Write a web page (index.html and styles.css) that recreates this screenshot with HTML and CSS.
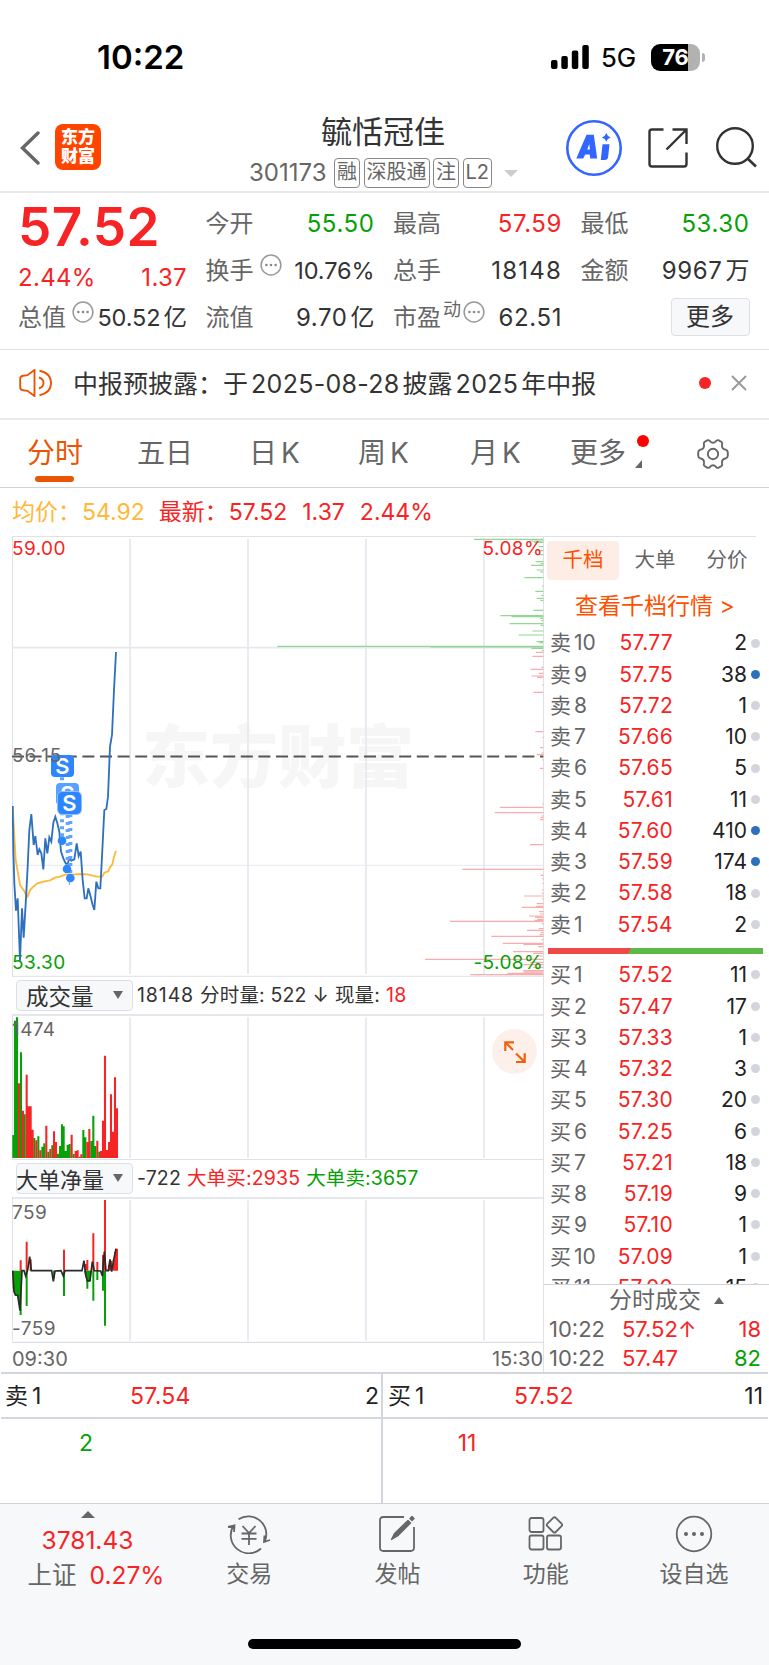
FILE: index.html
```html
<!DOCTYPE html>
<html lang="zh-CN">
<head>
    <meta charset="UTF-8">
    <meta name="viewport" content="width=device-width, initial-scale=1.0">
    <title>毓恬冠佳 301173</title>
    <link rel="stylesheet" href="styles.css">
</head>
<body>
    <svg class="defs" width="0" height="0">
        <symbol id="info" viewBox="0 0 22 22">
            <circle cx="11" cy="11" r="9.9" fill="none" stroke="#999" stroke-width="1.5"/>
            <circle cx="6.4" cy="11" r="1.3" fill="#888"/>
            <circle cx="11" cy="11" r="1.3" fill="#888"/>
            <circle cx="15.6" cy="11" r="1.3" fill="#888"/>
        </symbol>
    </svg>

    <div class="status">
        <span class="clock">10:22</span>
        <svg class="signal" width="38" height="24" viewBox="0 0 38 24">
            <rect x="0" y="15" width="6.5" height="9" rx="2"/>
            <rect x="10.3" y="11" width="6.5" height="13" rx="2"/>
            <rect x="20.8" y="5.5" width="6.5" height="18.5" rx="2"/>
            <rect x="31.3" y="0" width="6.5" height="24" rx="2"/>
        </svg>
        <span class="net">5G</span>
        <div class="battery"><span>76</span></div>
        <i class="nub"></i>
    </div>

    <header>
        <svg class="back" width="20" height="34" viewBox="0 0 20 34"><path d="M18 2 2.5 17 18 32" fill="none" stroke="#666" stroke-width="3.4" stroke-linecap="round"/></svg>
        <div class="logo">东方<br>财富</div>
        <div class="title">
            <h1>毓恬冠佳</h1>
            <div class="code">
                <span class="num">301173</span>
                <span class="tag">融</span>
                <span class="tag">深股通</span>
                <span class="tag">注</span>
                <span class="tag">L2</span>
                <i class="drop"></i>
            </div>
        </div>
        <svg class="ai" width="56" height="56" viewBox="0 0 56 56">
            <circle cx="28" cy="28" r="26.7" fill="#fff" stroke="#3366ff" stroke-width="2.6"/>
            <path d="M20.5 14.8h7.3l3.4 23.7h-7l-.5-4h-4.5l-2 4H10.3zM23.3 24l-2 5.5h2.6z" fill="#3366ff" fill-rule="evenodd"/>
            <path d="M36.5 24.2h7l-1.4 12.8q-.3 3-3.3 3H34.8z" fill="#3366ff"/>
            <path d="M40.3 13q1 3.4 4.4 4.4-3.4 1-4.4 4.4-1-3.4-4.4-4.4 3.4-1 4.4-4.4z" fill="#3366ff"/>
        </svg>
        <svg class="share" width="40" height="40" viewBox="0 0 40 40">
            <path d="M15.5 1.5H4q-2.5 0-2.5 2.5V36q0 2.5 2.5 2.5H36q2.5 0 2.5-2.5V24.5M18.5 21.5 38 2M24.5 1.5H38.5V16" fill="none" stroke="#333" stroke-width="2.4"/>
        </svg>
        <svg class="search" width="42" height="42" viewBox="0 0 42 42">
            <circle cx="19" cy="20" r="17.8" fill="none" stroke="#333" stroke-width="2.4"/>
            <path d="M31.5 32.5 40 40.5" stroke="#333" stroke-width="2.6"/>
        </svg>
    </header>

    <section class="quote">
        <div class="now">
            <div class="price">57.52</div>
            <div class="change"><span>2.44%</span><span>1.37</span></div>
            <div class="cell cap"><label>总值</label><svg class="info" width="22" height="22"><use href="#info"/></svg><b class="tight">50.52<i>亿</i></b></div>
        </div>
        <div class="cell"><label>今开</label><b class="green">55.50</b></div>
        <div class="cell"><label>最高</label><b class="red">57.59</b></div>
        <div class="cell"><label>最低</label><b class="green">53.30</b></div>
        <div class="cell turnover"><label>换手</label><svg class="info" width="22" height="22"><use href="#info"/></svg><b class="tight">10.76%</b></div>
        <div class="cell"><label>总手</label><b class="loose">18148</b></div>
        <div class="cell"><label>金额</label><b>9967<i>万</i></b></div>
        <div class="cell"><label>流值</label><b>9.70<i>亿</i></b></div>
        <div class="cell pe"><label>市盈<sup>动</sup></label><svg class="info" width="22" height="22"><use href="#info"/></svg><b>62.51</b></div>
        <div class="cell"><button class="more">更多</button></div>
    </section>

    <section class="notice">
        <svg width="34" height="28" viewBox="0 0 34 28" fill="none" stroke="#ea5504" stroke-width="1.9">
            <path d="M15.5 1 8.5 6.2 4 6.7Q1.2 7 1.2 10v8q0 3 2.8 3.3l4.5.5L15.5 27zM20 8.5q4.5 1.5 4.5 5.5T20 19.5M20.5 1.8q11.5 2.5 11.5 12.2T20.5 26.2"/>
        </svg>
        <p>中报预披露：于<span>2025-08-28</span>披露<span>2025</span>年中报</p>
        <i class="dot"></i>
        <svg class="close" width="16" height="16" viewBox="0 0 16 16"><path d="M1 1 15 15M15 1 1 15" stroke="#999" stroke-width="1.9"/></svg>
    </section>

    <nav class="tabs">
        <a class="on">分时</a>
        <a>五日</a>
        <a class="k">日<span>K</span></a>
        <a>周<span>K</span></a>
        <a class="month">月<span>K</span></a>
        <a class="more-tab">更多</a>
        <svg class="gear" width="32" height="32" viewBox="0 0 32 32" fill="none" stroke="#666" stroke-width="1.9">
            <circle cx="16" cy="16" r="5.2"/>
            <path d="M10.5 2.2Q12.5 2 13.2 3.3 14.5 4.8 16 4.8T18.8 3.3Q19.5 2 21.5 2.2L24.5 4Q25.7 5 25 6.8 24.5 11 29 11.8 30.8 12.5 30.8 14.5V17.5Q30.8 19.5 29 20.2 24.5 21 25 25.2 25.7 27 24.5 28L21.5 29.8Q19.5 30 18.8 28.7 17.5 27.2 16 27.2T13.2 28.7Q12.5 30 10.5 29.8L7.5 28Q6.3 27 7 25.2 7.5 21 3 20.2 1.2 19.5 1.2 17.5V14.5Q1.2 12.5 3 11.8 7.5 11 7 6.8 6.3 5 7.5 4Z"/>
        </svg>
    </nav>

    <div class="legend">
        <span class="avg">均价：</span><span class="avg v1">54.92</span>
        <span>最新：</span><span class="v2">57.52</span><span class="v3">1.37</span><span>2.44%</span>
    </div>

    <main>
        <div class="charts">
            <div class="chart">
                <div class="watermark">东方财富</div>
                <!-- chart units are thirds of a pixel -->
                <svg width="532" height="441" viewBox="36 18 1596 1323" fill="none">
                    <path d="M36 19.5H1632M37.5 18V1341M36 1339H1632" stroke="#dfe1e6" stroke-width="3"/>
                    <path d="M390 27V1332M744 27V1332M1098 27V1332M1452 27V1332M36 353H1630" stroke="#e6e8ef" stroke-width="5"/>
                    <path d="M36 1006H1630" stroke="#e6e8ef" stroke-width="3"/>
                    <path d="M36 679.5H1630" stroke="#555" stroke-width="6" stroke-dasharray="36 16.8"/>
                    <path stroke="#94d694" stroke-width="3.6" d="M1422 28H1630M1588 33H1630M1602 37H1630M1616 50H1630M1612 62H1630M1616 74H1630M1607 95H1630M1593 106H1630M1622 101H1630M1610 120H1630M1620 126H1630M1573 143H1630M1626 168H1630M1606 184H1630M1624 196H1630M1610 205H1630M1621 211H1630M1600 241H1630M1501 257H1630M1535 260H1630M1620 265H1630M1624 272H1630M1529 281H1630M1622 286H1630M1597 303H1630M1556 315H1630M1610 335H1630M1618 338H1630M832 349H1630M1291 351H1630M1594 355H1630M1626 362H1630"/>
                    <path stroke="#faabab" stroke-width="3.6" d="M1608 367H1630M1597 379H1630M1624 412H1630M1591 418H1630M1617 430H1630M1594 438H1630M1611 442H1630M1626 465H1630M1600 487H1630M1606 605H1630M1627 622H1630M1620 653H1630M1624 669H1630M1610 674H1630M1626 690H1630M1620 715H1630M1626 822H1630M1500 832H1630M1484 848H1630M1624 858H1630M1622 863H1630M1620 869H1630M1590 944H1630M1387 1018H1630M1622 1036H1630M1627 1046H1630M1627 1060H1630M1626 1080H1630M1626 1090H1630M1573 1098H1630M1625 1107H1630M1610 1121H1630M1608 1129H1630M1565 1132H1630M1617 1145H1630M1620 1152H1630M1587 1158H1630M1605 1162H1630M1612 1168H1630M1604 1171H1630M1350 1174H1630M1625 1181H1630M1616 1196H1630M1581 1201H1630M1622 1208H1630M1619 1214H1630M1474 1219H1630M1625 1229H1630M1508 1240H1630M1570 1243H1630M1615 1250H1630M1539 1265H1630M1600 1270H1630M1608 1278H1630M1275 1288H1630M1590 1297H1630M1570 1304H1630M1600 1312H1630M1570 1322H1630M1570 1326H1630M1522 1330H1630M1411 1334H1630"/>
                    <polyline stroke="#ffb837" stroke-width="5.5" points="38,828 42,900 47,990 54,1030 60,1065 72,1082 78,1095 83,1100 90,1080 100,1070 112,1060 130,1055 150,1051 165,1043 180,1040 195,1034 215,1034 240,1032 262,1033 290,1040 307,1040 313,1028 325,1024 330,1012 337,1003 342,980 348,962"/>
                    <polyline stroke="#2f70bd" stroke-width="5.5" points="38,828 40,960 43,1060 48,1142 53,1105 60,1292 66,1135 71,1223 78,1105 83,1010 88,900 94,852 101,945 106,918 113,975 118,958 124,970 130,1018 136,925 142,970 148,922 154,935 160,878 166,860 172,880 178,905 183,965 190,985 196,998 202,1005 208,985 214,992 223,988 230,940 236,978 242,965 248,1050 254,1105 260,1105 265,1075 272,1100 278,1125 283,1140 289,1055 295,1075 301,1075 307,960 313,840 319,837 324,800 330,650 336,615 342,480 348,366"/>
                    <path stroke="#62a4fb" stroke-width="12" stroke-dasharray="9 12" d="M186 742V925M203 855V1010M211 852V1040"/>
                    <path stroke="#62a4fb" stroke-width="3" d="M208 1050V1065"/>
                    <g fill="#2d86ff">
                        <circle cx="186" cy="932" r="13"/>
                        <circle cx="201" cy="1017" r="13"/>
                        <circle cx="211" cy="1044" r="13"/>
                    </g>
                </svg>
                <i class="mark m1">S</i>
                <i class="mark m2">S</i>
                <i class="mark m3">S</i>
                <span class="tick top red">59.00</span>
                <span class="tick mid">56.15</span>
                <span class="tick bottom green">53.30</span>
                <span class="tick top right red">5.08%</span>
                <span class="tick bottom right green">-5.08%</span>
            </div>

            <div class="bar">
                <button class="select">成交量</button>
                <span class="total">18148</span><span>分时量: 522</span><span class="arrow">↓</span><span>现量:</span><span class="red">18</span>
            </div>
            <div class="chart">
                <svg width="532" height="146" viewBox="36 132 1596 438" fill="none">
                    <path d="M36 135H1632" stroke="#dcdfe5" stroke-width="5"/>
                    <path d="M37.5 132V570M36 568.5H1632" stroke="#dfe1e6" stroke-width="3"/>
                    <path d="M390 142V564M744 142V564M1098 142V564M1452 142V564" stroke="#e6e8ef" stroke-width="5"/>
                    <path stroke="#07a007" stroke-width="6.2" d="M40 564V495M45 564V152M51 564V142M63 564V247M74 564V433M103 564V504M115 564V499M127 564V530M133 564V520M145 564V545M157 564V526M174 564V551M180 564V528M186 564V463M191 564V469M197 564V543M203 564V525M209 564V522M221 564V552M239 564V560M250 564V480M256 564V502M274 564V513M280 564V437M286 564V528M298 564V545"/>
                    <path stroke="#f62424" stroke-width="6.2" d="M57 564V340M69 564V422M80 564V314M86 564V409M92 564V409M98 564V479M109 564V511M121 564V541M139 564V467M151 564V537M162 564V484M168 564V516M215 564V494M227 564V543M233 564V541M244 564V553M262 564V516M268 564V477M292 564V512M303 564V543M309 564V452M315 564V257M321 564V540M327 564V516M333 564V373M339 564V485M345 564V322M351 564V415"/>
                </svg>
                <span class="tick upper">1474</span>
                <div class="expand">
                    <svg width="24" height="24" viewBox="0 0 24 24" fill="none" stroke="#f2600c" stroke-width="2.2"><path d="M11 2.3H2.3V11M2.3 2.3 10 10M13 22H21.7V13.3M21.7 22 13 13.5"/></svg>
                </div>
            </div>

            <div class="bar">
                <button class="select wide">大单净量</button>
                <span>-722</span><span class="red">大单买:2935</span><span class="green">大单卖:3657</span>
            </div>
            <div class="chart">
                <svg width="532" height="146" viewBox="36 681 1596 438" fill="none">
                    <path d="M36 684H1632M36 1118H1632" stroke="#dcdfe5" stroke-width="5"/>
                    <path d="M37.5 681V1112" stroke="#dfe1e6" stroke-width="3"/>
                    <path d="M390 691V1112M744 691V1112M1098 691V1112M1452 691V1112" stroke="#e6e8ef" stroke-width="5"/>
                    <path fill="#07a007" d="M38 902V955L44 972 54 978 59 1015V1035H65V902ZM252 902 262 935H272L275 902Z"/>
                    <path stroke="#07a007" stroke-width="6" d="M80 902V1008M162 902V925M192 902V978M262 902V956M268 902V935M280 902V992M292 902V930M309 902V962M315 902V1067"/>
                    <path stroke="#f62424" stroke-width="6" d="M62 902V871M80 902V815M92 902V868M192 902V839M258 902V882M262 902V870M280 902V790M292 902V876M309 902V855M315 902V690M327 902V885M333 902V872M341 902V870M346 902V845M351 902V836"/>
                    <polyline stroke="#2a2a2a" stroke-width="5" points="38,902 42,965 46,975 53,976 60,1022 66,902 72,902 77,918 83,900 89,860 94,902 155,902 160,934 165,903 183,902 190,918 195,902 246,902 252,872 257,915 262,933 270,931 277,875 283,902 302,903 307,918 313,845 318,902 325,902 330,868 335,905 341,870 348,836"/>
                </svg>
                <span class="tick upper">759</span>
                <span class="tick bottom">-759</span>
            </div>
            <div class="times"><span>09:30</span><span>15:30</span></div>
        </div>

        <aside>
            <div class="modes"><a class="on">千档</a><a>大单</a><a>分价</a></div>
            <a class="link">查看千档行情 &gt;</a>
            <div class="book">
                <ul>
                    <li><span>卖<em>10</em></span><b>57.77</b><q>2</q><i></i></li>
                    <li><span>卖<em>9</em></span><b>57.75</b><q>38</q><i class="big"></i></li>
                    <li><span>卖<em>8</em></span><b>57.72</b><q>1</q><i></i></li>
                    <li><span>卖<em>7</em></span><b>57.66</b><q>10</q><i></i></li>
                    <li><span>卖<em>6</em></span><b>57.65</b><q>5</q><i></i></li>
                    <li><span>卖<em>5</em></span><b>57.61</b><q>11</q><i></i></li>
                    <li><span>卖<em>4</em></span><b>57.60</b><q>410</q><i class="big"></i></li>
                    <li><span>卖<em>3</em></span><b>57.59</b><q>174</q><i class="big"></i></li>
                    <li><span>卖<em>2</em></span><b>57.58</b><q>18</q><i></i></li>
                    <li><span>卖<em>1</em></span><b>57.54</b><q>2</q><i></i></li>
                </ul>
                <div class="ratio"></div>
                <ul>
                    <li><span>买<em>1</em></span><b>57.52</b><q>11</q><i></i></li>
                    <li><span>买<em>2</em></span><b>57.47</b><q>17</q><i></i></li>
                    <li><span>买<em>3</em></span><b>57.33</b><q>1</q><i></i></li>
                    <li><span>买<em>4</em></span><b>57.32</b><q>3</q><i></i></li>
                    <li><span>买<em>5</em></span><b>57.30</b><q>20</q><i></i></li>
                    <li><span>买<em>6</em></span><b>57.25</b><q>6</q><i></i></li>
                    <li><span>买<em>7</em></span><b>57.21</b><q>18</q><i></i></li>
                    <li><span>买<em>8</em></span><b>57.19</b><q>9</q><i></i></li>
                    <li><span>买<em>9</em></span><b>57.10</b><q>1</q><i></i></li>
                    <li><span>买<em>10</em></span><b>57.09</b><q>1</q><i></i></li>
                    <li><span>买<em>11</em></span><b>57.00</b><q>15</q><i></i></li>
                </ul>
            </div>
            <div class="deals">
                <h2>分时成交<i class="up"></i></h2>
                <p><span>10:22</span><b>57.52↑</b><q class="red">18</q></p>
                <p><span>10:22</span><b>57.47</b><q class="green">82</q></p>
            </div>
        </aside>
    </main>

    <section class="best">
        <div class="side ask">
            <div class="line"><span>卖<em>1</em></span><b>57.54</b><q>2</q></div>
            <div class="queue green">2</div>
        </div>
        <div class="side bid">
            <div class="line"><span>买<em>1</em></span><b>57.52</b><q>11</q></div>
            <div class="queue red">11</div>
        </div>
    </section>

    <footer>
        <div class="index">
            <i class="up"></i>
            <div class="red">3781.43</div>
            <div class="sh">上证<span class="red">0.27%</span></div>
        </div>
        <a>
            <svg width="44" height="40" viewBox="0 0 44 40" fill="none" stroke="#666" stroke-width="1.8">
                <path d="M11.5 5.2A18 18 0 0 1 38 27M34 34.5A18 18 0 0 1 7 11M1 13 7.5 11.5 7 18M37.5 21.5 37 28 43 26M15.5 12 22 19 28.5 12M14.5 19.5H29.5M14.5 24.8H29.5M22 19V31"/>
            </svg>
            交易
        </a>
        <a>
            <svg width="40" height="40" viewBox="0 0 40 40" fill="none" stroke="#666" stroke-width="1.8">
                <path d="M27 3H6.5Q3 3 3 6.5V33.5Q3 37 6.5 37H33.5Q37 37 37 33.5V13"/>
                <path d="M14.5 25.5 17.5 19.5 31 6.5 33.5 9 20.5 22zM33 4.5 35 2.5 37 4.5 35 6.5z" fill="#666" stroke-width="1.4" stroke-linejoin="round"/>
            </svg>
            发帖
        </a>
        <a>
            <svg width="40" height="40" viewBox="0 0 40 40" fill="none" stroke="#666" stroke-width="1.8">
                <rect x="3.5" y="4" width="14" height="14" rx="2"/>
                <rect x="3.5" y="21.5" width="14" height="14" rx="2"/>
                <rect x="21" y="21.5" width="14" height="14" rx="2"/>
                <rect x="22.5" y="5" width="11.8" height="11.8" rx="1.8" transform="rotate(45 28.4 11)"/>
            </svg>
            功能
        </a>
        <a>
            <svg width="40" height="40" viewBox="0 0 40 40" fill="none" stroke="#666" stroke-width="1.8">
                <circle cx="20" cy="20" r="17.3"/>
                <g fill="#666" stroke="none"><circle cx="12" cy="20" r="2"/><circle cx="20" cy="20" r="2"/><circle cx="28" cy="20" r="2"/></g>
            </svg>
            设自选
        </a>
        <div class="home"></div>
    </footer>
</body>
</html>
```
FILE: styles.css
```css
* {
    box-sizing: border-box;
}

body {
    margin: 0;
    width: 769px;
    height: 1665px;
    overflow: hidden;
    background: #fff;
    color: #333;
    font-family: Inter, "Noto Sans CJK SC", sans-serif;
    line-height: 1.2;
    display: flex;
    flex-direction: column;
    white-space: nowrap;
}

i, em {
    font-style: normal;
}

b {
    font-weight: 400;
}

h1, h2, p, ul {
    margin: 0;
    padding: 0;
    font-weight: 400;
    list-style: none;
}

q {
    quotes: none;
}

svg {
    display: block;
    flex: none;
}

button {
    font-family: inherit;
    padding: 0;
    color: #333;
    background: #f7f8fa;
    border: 1px solid #dcdfe6;
    border-radius: 4px;
}

.defs {
    position: absolute;
}

.red {
    color: #f62424;
}

.green {
    color: #07a007;
}

/* status bar */
.status {
    height: 114px;
    display: flex;
    align-items: center;
    color: #000;
}

.clock {
    width: 454px;
    margin-left: 97px;
    padding-top: 2px;
    font-size: 33px;
    font-weight: 600;
}

.net {
    width: 49px;
    padding: 2px 0 0 12px;
    font-size: 26px;
    -webkit-text-stroke: 0.2px #000;
}

.battery {
    margin-left: 13px;
    width: 49px;
    height: 27px;
    border-radius: 9px;
    background: linear-gradient(90deg, #000 37px, #b2b2b2 37px);
    color: #fff;
    font-size: 22px;
    font-weight: 700;
    line-height: 27px;
    text-align: center;
}

.nub {
    width: 3px;
    height: 9px;
    margin-left: 2px;
    border-radius: 0 4px 4px 0;
    background: #b2b2b2;
}

/* header */
header {
    height: 79px;
    display: flex;
    align-items: flex-start;
    border-bottom: 2px solid #e9e9e9;
}

.back {
    margin: 17px 0 0 20px;
}

.logo {
    width: 46px;
    height: 46px;
    margin: 10px 0 0 15px;
    padding-top: 4px;
    border-radius: 8px;
    background: #ff4400;
    color: #fff;
    font-size: 17px;
    font-weight: 900;
    line-height: 19px;
    text-align: center;
}

.title {
    width: 267px;
    margin-left: 148px;
}

.title h1 {
    height: 36px;
    margin-left: 72px;
    font-size: 31px;
    line-height: 36px;
}

.code {
    display: flex;
    align-items: center;
    height: 30px;
    margin-top: 8px;
    color: #666;
}

.num {
    flex: 0 0 86px;
    font-size: 24px;
}

.tag {
    flex: none;
    height: 30px;
    margin-right: 3.5px;
    padding: 0 2px;
    border: 1px solid #888;
    border-radius: 4px;
    font-size: 20px;
    line-height: 27px;
}

.tag:nth-child(2) {
    margin-left: -1px;
}

.drop {
    margin-left: 8px;
    border: 7px solid transparent;
    border-top-color: #ccc;
    border-bottom: 0;
}

.ai {
    margin: 6px 0 0 50px;
}

.share {
    margin: 14px 0 0 26px;
}

.search {
    margin: 12px 0 0 28px;
}

/* quote */
.quote {
    height: 157px;
    padding: 8px 18px 0;
    display: grid;
    grid-template-columns: repeat(4, 169px);
    grid-template-rows: repeat(3, 47px);
    column-gap: 18.5px;
    border-bottom: 1px solid #e2e2e2;
    font-size: 24px;
}

.now {
    grid-row: span 3;
    margin-top: -4px;
}

.price {
    height: 60px;
    font-size: 53px;
    font-weight: 600;
    line-height: 60px;
    letter-spacing: 0.4px;
    color: #f62424;
}

.change {
    height: 40px;
    display: flex;
    justify-content: space-between;
    line-height: 42px;
    letter-spacing: 0.3px;
    color: #f62424;
}

.cell {
    display: flex;
    align-items: center;
}

.cap {
    height: 42px;
}

.cell label {
    color: #666;
}

.cell b {
    margin-left: auto;
    letter-spacing: 0.6px;
}

.cell .tight {
    font-size: 23.5px;
    letter-spacing: -0.1px;
}

.cell .loose {
    letter-spacing: 1.2px;
}

.cell b i {
    margin-left: 3px;
    letter-spacing: 0;
}

.info {
    margin: -13px 0 0 6px;
}

.pe sup {
    font-size: 18px;
    line-height: 0;
    vertical-align: 10px;
    margin-left: 2px;
}

.pe .info {
    margin-left: 2px;
}

.more {
    width: 79px;
    height: 38px;
    margin: -4px 0 0 auto;
    font-size: 24px;
    line-height: 34px;
}

/* notice */
.notice {
    height: 70px;
    padding: 0 22px 2px 19px;
    display: flex;
    align-items: center;
    border-bottom: 2px solid #eaeaea;
}

.notice p {
    width: 626px;
    margin-left: 20px;
    padding-top: 1px;
    font-size: 25px;
}

.notice p span {
    margin: 0 3px;
    letter-spacing: 0.3px;
}

.dot {
    width: 12px;
    height: 12px;
    border-radius: 50%;
    background: #f62424;
}

.close {
    margin-left: auto;
}

/* tabs */
.tabs {
    height: 68px;
    padding-left: 27px;
    display: flex;
    align-items: center;
    border-bottom: 1px solid #cfd2d8;
    font-size: 28px;
    color: #666;
}

.tabs a {
    position: relative;
    width: 112px;
    padding-top: 1px;
}

.tabs .k {
    width: 109px;
}

.tabs .month {
    width: 96px;
}

.tabs span {
    margin-left: 4px;
}

.tabs .on {
    width: 110px;
    color: #ea5504;
}

.tabs .on::after {
    content: "";
    position: absolute;
    left: 8px;
    top: 40px;
    width: 39px;
    height: 6px;
    border-radius: 3px;
    background: #ea5504;
}

.tabs .more-tab {
    width: 121px;
    padding-left: 4px;
}

.more-tab::before {
    content: "";
    position: absolute;
    left: 70.5px;
    top: -1px;
    width: 12px;
    height: 12px;
    border-radius: 50%;
    background: #ff0000;
}

.more-tab::after {
    content: "";
    position: absolute;
    left: 69px;
    bottom: 3px;
    border-left: 7px solid transparent;
    border-bottom: 8px solid #666;
}

.gear {
    margin-left: 10px;
}

/* legend */
.legend {
    height: 48px;
    padding: 2px 0 0 12px;
    display: flex;
    align-items: center;
    font-size: 23px;
    color: #f62424;
}

.legend .avg {
    color: #ffb837;
}

.legend .v1 {
    margin: 0 14px 0 1px;
}

.legend .v2 {
    margin: 0 15px 0 1px;
}

.legend .v3 {
    margin-right: 15px;
}

/* main */
main {
    height: 836px;
    display: flex;
}

.charts {
    width: 532px;
    margin-left: 12px;
    border-right: 1px solid #dfe1e6;
}

.chart {
    position: relative;
}

.chart svg {
    position: relative;
}

.watermark {
    position: absolute;
    left: 130px;
    top: 173px;
    font-size: 68px;
    font-weight: 900;
    line-height: 96px;
    color: #f6f6f6;
}

.tick {
    position: absolute;
    left: 0;
    font-size: 19px;
    line-height: 22px;
    letter-spacing: 0.4px;
    color: #666;
}

.tick.red {
    color: #f62424;
}

.tick.green {
    color: #07a007;
}

.tick.top {
    top: 2px;
}

.tick.upper {
    top: 5px;
}

.tick.mid {
    top: 209px;
    letter-spacing: 0.9px;
}

.tick.bottom {
    bottom: 3px;
}

.tick.right {
    left: auto;
    right: 0;
}

.mark {
    position: absolute;
    width: 23px;
    height: 22px;
    border-radius: 4px;
    background: #2d86ff;
    color: #fff;
    font-size: 22px;
    font-weight: 600;
    line-height: 22px;
    text-align: center;
}

.m1 {
    left: 39px;
    top: 219px;
}

.m2 {
    left: 44px;
    top: 247px;
    background: #5aa0ff;
}

.m3 {
    left: 46px;
    top: 256px;
    outline: 1px solid #8fc0ff;
}

.bar {
    height: 37px;
    padding-top: 1px;
    display: flex;
    align-items: center;
    gap: 6px;
    font-size: 19.5px;
    letter-spacing: 0.15px;
}

.bar .total {
    letter-spacing: 0.9px;
}

.select {
    width: 117px;
    height: 31px;
    margin: -1px -2px 0 4px;
    display: flex;
    align-items: center;
    justify-content: space-between;
    padding: 0 9px 1px;
    font-size: 22.5px;
}

.select.wide {
    padding-left: 0;
    font-size: 22px;
    text-indent: -1px;
}

.select::after {
    content: "";
    border: 5px solid transparent;
    border-top: 8px solid #666;
    border-bottom: 0;
}

.expand {
    position: absolute;
    left: 480px;
    top: 15px;
    width: 45px;
    height: 45px;
    display: grid;
    place-items: center;
    border-radius: 50%;
    background: #fdf0ea;
}

.times {
    height: 29px;
    display: flex;
    justify-content: space-between;
    font-size: 20px;
    line-height: 32px;
    color: #666;
}

/* order book */
aside {
    width: 225px;
    display: flex;
    flex-direction: column;
}

.modes {
    display: flex;
    height: 44px;
    padding: 4px 0 0 3px;
    border-top: 1px solid #dfe1e6;
    margin-right: 13px;
    font-size: 20.5px;
    line-height: 38px;
    color: #666;
}

.modes a {
    flex: 0 0 72px;
    text-align: center;
    border-radius: 4px;
}

.modes .on {
    background: #feede5;
    color: #fe5000;
}

.link {
    height: 47px;
    padding: 0 0 0 31px;
    font-size: 23px;
    line-height: 52px;
    color: #fe5000;
}

.book {
    height: 658px;
    padding-top: 0.5px;
    overflow: hidden;
}

.book li {
    height: 31.26px;
    display: flex;
    align-items: center;
    font-size: 21px;
    color: #222;
}

.book span {
    width: 60px;
    margin-left: 6px;
    color: #666;
}

.book em {
    margin-left: 3px;
}

.book b {
    width: 63px;
    text-align: right;
    letter-spacing: 0.3px;
    color: #f62424;
}

.book q {
    width: 74px;
    text-align: right;
}

.book li i {
    width: 9px;
    height: 9px;
    margin-left: 4px;
    border-radius: 50%;
    background: #d2d5dc;
}

.book li .big {
    background: #2f70bd;
}

.ratio {
    height: 6px;
    margin: 8px 6px 5.4px 4px;
    background: linear-gradient(120deg, #ee4848 72px, #5bb947 72px);
}

.deals {
    border-top: 1px solid #cfd2d8;
    color: #666;
    font-size: 22px;
}

.deals h2 {
    height: 30px;
    padding: 1px 0 0 65px;
    display: flex;
    align-items: center;
    font-size: 23px;
}

.up {
    border: 5px solid transparent;
    border-bottom: 7px solid #666;
    border-top: 0;
}

.deals .up {
    margin-left: 13px;
}

.deals p {
    height: 28.5px;
    display: flex;
    align-items: center;
    padding: 0 8px 0 5px;
}

.deals span {
    width: 73px;
}

.deals b {
    color: #f62424;
}

.deals q {
    margin-left: auto;
}

/* best bid and ask */
.best {
    height: 131px;
    margin: 0 1px;
    display: flex;
    border-top: 2px solid #d3d6dc;
    font-size: 23px;
}

.ask {
    width: 380px;
}

.bid {
    flex: 1;
    border-left: 2px solid #d3d6dc;
}

.line {
    height: 45px;
    display: flex;
    align-items: center;
    padding: 3px 2px 0 4px;
    border-bottom: 2px solid #d3d6dc;
    color: #222;
}

.bid .line {
    padding: 3px 5px 0;
}

.line em {
    margin-left: 4px;
}

.line span {
    width: 125px;
}

.bid .line span {
    width: 126px;
}

.line b {
    letter-spacing: 0.3px;
    color: #f62424;
}

.line q {
    margin-left: auto;
}

.queue {
    width: 170px;
    padding-top: 11px;
    text-align: center;
}

.bid .queue {
    width: 168px;
}

/* bottom nav */
footer {
    position: relative;
    flex: 1;
    display: flex;
    background: #f7f8fa;
    border-top: 1px solid #cfd2d8;
    color: #666;
    font-size: 23px;
}

footer > a {
    width: 148.3px;
    display: flex;
    flex-direction: column;
    align-items: center;
    padding-top: 10px;
    line-height: 40px;
}

.index {
    width: 175px;
    display: flex;
    flex-direction: column;
    align-items: center;
    padding-top: 7px;
    font-size: 24.5px;
    line-height: 34.5px;
}

.index .up {
    border-width: 0 7px 7px;
    margin-bottom: 5px;
}

.sh {
    padding-left: 17px;
}

.index span {
    margin-left: 13px;
}

.home {
    position: absolute;
    left: 248px;
    bottom: 16px;
    width: 273px;
    height: 10px;
    border-radius: 5px;
    background: #000;
}
```
